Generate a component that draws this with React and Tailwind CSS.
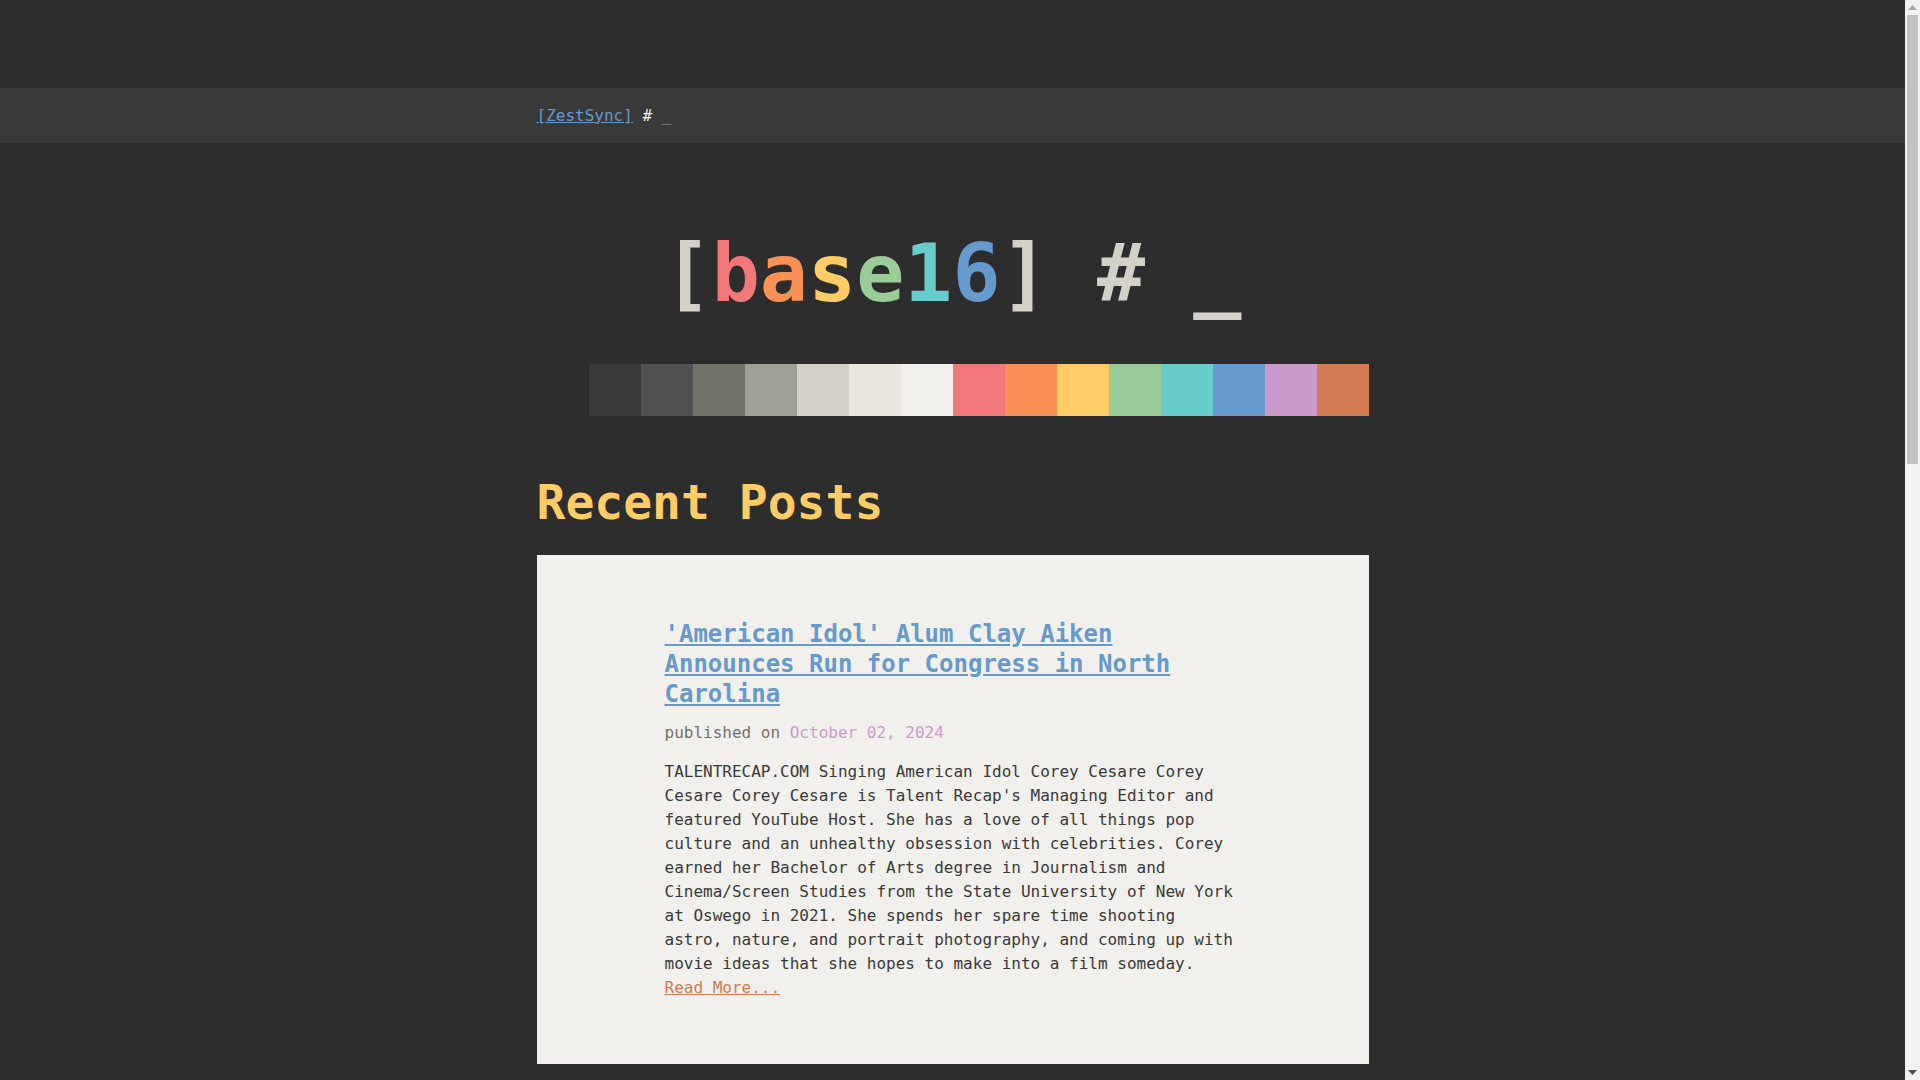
import React from "react";

const swatches = [
  "bg-[#2d2d2d]",
  "bg-[#393939]",
  "bg-[#515151]",
  "bg-[#747369]",
  "bg-[#a09f93]",
  "bg-[#d3d0c8]",
  "bg-[#e8e6df]",
  "bg-[#f2f0ec]",
  "bg-[#f2777a]",
  "bg-[#f99157]",
  "bg-[#ffcc66]",
  "bg-[#99cc99]",
  "bg-[#66cccc]",
  "bg-[#6699cc]",
  "bg-[#cc99cc]",
  "bg-[#d27b53]",
];

const posts = [
  {
    title: "'American Idol' Alum Clay Aiken Announces Run for Congress in North Carolina",
    date: "October 02, 2024",
    body:
      "TALENTRECAP.COM Singing American Idol Corey Cesare Corey Cesare Corey Cesare is Talent Recap's Managing Editor and featured YouTube Host. She has a love of all things pop culture and an unhealthy obsession with celebrities. Corey earned her Bachelor of Arts degree in Journalism and Cinema/Screen Studies from the State University of New York at Oswego in 2021. She spends her spare time shooting astro, nature, and portrait photography, and coming up with movie ideas that she hopes to make into a film someday.",
  },
  {
    title: "New Streaming Series Tops the Charts in Its First Week of Release",
    date: "September 28, 2024",
    body:
      "The series debuted to strong reviews and quickly climbed to the top of the most watched lists across several platforms. Critics praised the writing, the cast and the soundtrack, while fans took to social media to share theories about the season finale and what might come next for the characters they have grown to love over the past few weeks of episodes.",
  },
  {
    title: "Local Festival Returns With a Bigger Lineup Than Ever Before",
    date: "September 21, 2024",
    body:
      "After a year away, the annual festival is back with three stages, dozens of artists and a weekend full of food, art and music. Organizers say tickets are selling faster than in previous years and encourage visitors to plan ahead, arrive early and take advantage of the shuttle service running between the parking areas and the main gate.",
  },
];

function Post({ post }) {
  return (
    <article className="bg-[#f2f0ec] px-[128px] py-[64px]">
      <h2 className="text-[24px] leading-[30px] font-bold">
        <a href="#" className="text-[#6699cc] underline">
          {post.title}
        </a>
      </h2>
      <p className="mt-[12px] text-[16px] leading-[24px] text-[#747369]">
        published on <span className="text-[#cc99cc]">{post.date}</span>
      </p>
      <p className="mt-[15px] text-[16px] leading-[24px] text-[#393939]">
        {post.body}{" "}
        <a href="#" className="text-[#d27b53] underline">
          Read More...
        </a>
      </p>
    </article>
  );
}

function Scrollbar() {
  return (
    <div className="w-[15px] h-full bg-[#f1f1f1] flex flex-col items-center shrink-0">
      <div className="h-[15px] w-full flex items-center justify-center">
        <svg width="9" height="5" viewBox="0 0 9 5">
          <polygon points="0,5 4.5,0 9,5" fill="#a3a3a3" />
        </svg>
      </div>
      <div className="w-[11px] h-[449px] bg-[#c1c1c1]" />
      <div className="flex-1" />
      <div className="h-[15px] w-full flex items-center justify-center">
        <svg width="9" height="5" viewBox="0 0 9 5">
          <polygon points="0,0 9,0 4.5,5" fill="#505050" />
        </svg>
      </div>
    </div>
  );
}

export default function App() {
  return (
    <div
      className="h-screen flex bg-[#2d2d2d] overflow-hidden"
      style={{ fontFamily: '"DejaVu Sans Mono", "Liberation Mono", monospace' }}
    >
      <div className="flex-1 h-full overflow-y-auto [scrollbar-width:none]">
        <div className="pt-[88px]">
          <nav className="bg-[#393939] h-[55px] flex items-center">
            <div className="w-[832px] mx-auto text-[16px] leading-[24px]">
              <a href="#" className="text-[#6699cc] underline">
                [ZestSync]
              </a>
              <span className="text-[#f2f0ec]"> # </span>
              <span className="text-[#a09f93]">_</span>
            </div>
          </nav>

          <main className="w-[832px] mx-auto pb-[337px]">
            <h1 className="mt-[84px] text-center text-[80px] leading-[93px] font-bold text-[#d3d0c8] whitespace-pre">
              [<span className="text-[#f2777a]">b</span>
              <span className="text-[#f99157]">a</span>
              <span className="text-[#ffcc66]">s</span>
              <span className="text-[#99cc99]">e</span>
              <span className="text-[#66cccc]">1</span>
              <span className="text-[#6699cc]">6</span>] # _
            </h1>

            <div className="mt-[44px] flex">
              {swatches.map((c) => (
                <div key={c} className={`w-[52px] h-[52px] ${c}`} />
              ))}
            </div>

            <h2 className="mt-[58px] text-[48px] leading-[56px] font-bold text-[#ffcc66]">
              Recent Posts
            </h2>

            <div className="mt-[25px] flex flex-col gap-[32px]">
              {posts.map((p) => (
                <Post key={p.title} post={p} />
              ))}
            </div>
          </main>
        </div>
      </div>
      <Scrollbar />
    </div>
  );
}
